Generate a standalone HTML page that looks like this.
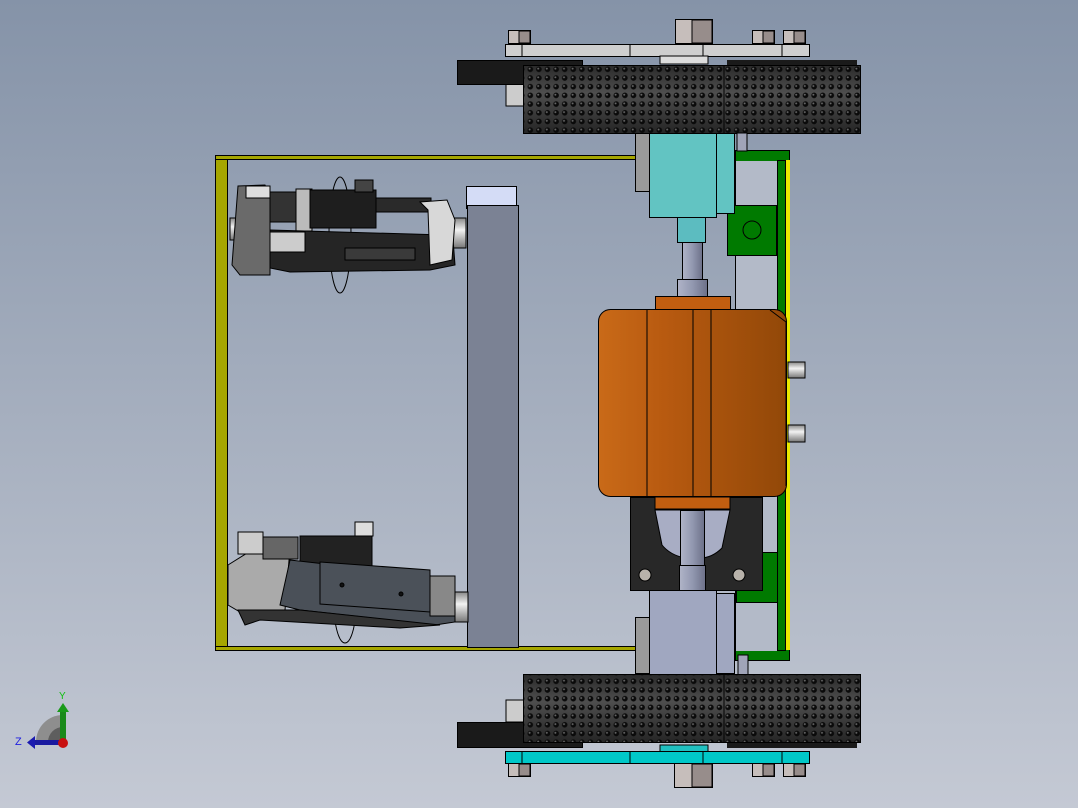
<!DOCTYPE html>
<html><head><meta charset="utf-8"><style>html,body{margin:0;padding:0;overflow:hidden}svg{display:block}</style></head><body>
<svg width="1078" height="808" viewBox="0 0 1078 808" xmlns="http://www.w3.org/2000/svg" font-family="Liberation Sans, sans-serif">
<defs>
<linearGradient id="bg" x1="0" y1="0" x2="0" y2="1"><stop offset="0" stop-color="#8593a8"/><stop offset="1" stop-color="#c4c9d4"/></linearGradient>
<pattern id="dots" width="8.6" height="8.7" patternUnits="userSpaceOnUse" x="526" y="65"><circle cx="4.3" cy="4.3" r="2.8" fill="#0a0a0a"/><circle cx="3.6" cy="3.6" r="1" fill="#666"/></pattern>
<pattern id="dots2" width="8.6" height="8.7" patternUnits="userSpaceOnUse" x="526" y="677"><circle cx="4.3" cy="4.3" r="2.8" fill="#0a0a0a"/><circle cx="3.6" cy="3.6" r="1" fill="#666"/></pattern>
<linearGradient id="tire" x1="0" y1="0" x2="0" y2="1"><stop offset="0" stop-color="#2a2a2a"/><stop offset=".4" stop-color="#4e4e4e"/><stop offset="1" stop-color="#252525"/></linearGradient>
<linearGradient id="org" x1="0" y1="0" x2="1" y2="0"><stop offset="0" stop-color="#c96a18"/><stop offset=".35" stop-color="#b85a10"/><stop offset="1" stop-color="#924808"/></linearGradient>
<linearGradient id="shaft" x1="0" y1="0" x2="1" y2="0"><stop offset="0" stop-color="#b0b4c8"/><stop offset=".5" stop-color="#9298b0"/><stop offset="1" stop-color="#6c7088"/></linearGradient>
<linearGradient id="pin" x1="0" y1="0" x2="0" y2="1"><stop offset="0" stop-color="#888"/><stop offset=".4" stop-color="#f2f2f2"/><stop offset="1" stop-color="#777"/></linearGradient>
</defs>
<rect width="1078" height="808" fill="url(#bg)"/>

<!-- yellow frame -->
<rect x="215.5" y="155.5" width="12" height="495" fill="#a6a600" stroke="#000"/>
<rect x="215.5" y="155.5" width="420" height="4" fill="#a6a600" stroke="#000"/>
<rect x="215.5" y="646.5" width="420" height="4" fill="#a6a600" stroke="#000"/>

<!-- grey bar -->
<rect x="466.5" y="186.5" width="50" height="22" fill="#d4dcf6" stroke="#000"/>
<rect x="467.5" y="205.5" width="51" height="442" fill="#7b8294" stroke="#000"/>

<!-- top motor -->
<g stroke="#000" stroke-width="1">
<ellipse cx="340" cy="235" rx="11" ry="58" fill="none"/>
<rect x="452" y="218" width="14" height="30" fill="url(#pin)"/>
<rect x="230" y="218" width="10" height="22" fill="url(#pin)"/>
<polygon points="238,186 265,185 270,195 270,275 240,275 232,265" fill="#6a6a6a"/>
<rect x="246" y="186" width="24" height="12" fill="#ddd"/>
<rect x="270" y="192" width="30" height="30" fill="#333"/>
<rect x="296" y="189" width="16" height="42" fill="#bbb"/>
<rect x="310" y="190" width="66" height="38" fill="#1e1e1e"/>
<rect x="355" y="180" width="18" height="12" fill="#444"/>
<rect x="376" y="198" width="55" height="14" fill="#2a2a2a"/>
<polygon points="270,230 445,235 452,226 455,265 430,270 290,272 270,268" fill="#252525"/>
<rect x="270" y="232" width="35" height="20" fill="#ccc"/>
<polygon points="420,202 447,200 455,220 452,260 430,265 428,210" fill="#d8d8d8"/>
<rect x="345" y="248" width="70" height="12" fill="#3a3a3a"/>
</g>

<!-- bottom motor -->
<g stroke="#000" stroke-width="1">
<ellipse cx="345" cy="595" rx="12" ry="48" fill="none"/>
<rect x="452" y="592" width="16" height="30" fill="url(#pin)"/>
<polygon points="228,565 260,545 290,548 285,610 240,612 228,605" fill="#aaa"/>
<rect x="238" y="532" width="25" height="22" fill="#ccc"/>
<rect x="263" y="537" width="35" height="22" fill="#666"/>
<rect x="300" y="536" width="72" height="32" fill="#222"/>
<rect x="355" y="522" width="18" height="14" fill="#ddd"/>
<polygon points="290,560 440,577 455,580 455,622 435,625 300,610 280,605" fill="#4a5058"/>
<polygon points="320,562 430,570 430,612 320,604" fill="#4b5159"/>
<rect x="430" y="576" width="25" height="40" fill="#888"/>
<polygon points="238,610 300,610 440,625 400,628 260,620 245,625" fill="#333"/>
<circle cx="342" cy="585" r="2" fill="#111"/>
<circle cx="401" cy="594" r="2" fill="#111"/>
</g>

<!-- green bracket -->
<g stroke="#000">
<rect x="735.5" y="150.5" width="54" height="510" fill="#007a00"/>
<rect x="736" y="161" width="42" height="490" fill="#b3bac8" stroke="none"/>
<rect x="777.5" y="160.5" width="8" height="490" fill="#007a00"/>
<rect x="786" y="160" width="4" height="490" fill="#eaea00" stroke="none"/>
<rect x="727.5" y="205.5" width="49" height="50" fill="#007a00"/>
<circle cx="752" cy="230" r="9" fill="none"/>
<rect x="736.5" y="552.5" width="41" height="50" fill="#007a00"/>
</g>

<!-- top plate & bolts -->
<g stroke="#000">
<rect x="675.5" y="19.5" width="37" height="24" fill="#c6bebb"/><rect x="692" y="20" width="20" height="23" fill="#978d8b"/>
<rect x="508.5" y="30.5" width="22" height="13" fill="#c6bebb"/><rect x="519" y="31" width="11" height="12" fill="#978d8b"/>
<rect x="752.5" y="30.5" width="22" height="13" fill="#c6bebb"/><rect x="763" y="31" width="11" height="12" fill="#978d8b"/>
<rect x="783.5" y="30.5" width="22" height="13" fill="#c6bebb"/><rect x="794" y="31" width="11" height="12" fill="#978d8b"/>
<rect x="505.5" y="44.5" width="304" height="12" fill="#cfcfcf"/>
<line x1="522" y1="44" x2="522" y2="56"/><line x1="630" y1="44" x2="630" y2="56"/><line x1="703" y1="44" x2="703" y2="56"/><line x1="782" y1="44" x2="782" y2="56"/>
<rect x="660" y="56" width="48" height="8" fill="#ddd"/>
<rect x="506" y="84" width="18" height="22" fill="#ccc"/>
</g>
<rect x="457.5" y="60.5" width="125" height="24" fill="#1a1a1a" stroke="#000"/>
<rect x="727" y="60" width="130" height="6" fill="#1a1a1a"/>
<rect x="523.5" y="65.5" width="337" height="68" fill="url(#tire)" stroke="#000"/>
<rect x="524" y="66" width="336" height="67" fill="url(#dots)"/>
<line x1="724" y1="66" x2="724" y2="133" stroke="#000"/>

<!-- cyan block top -->
<g stroke="#000">
<rect x="635.5" y="133.5" width="15" height="58" fill="#9a9a9a"/>
<rect x="649.5" y="133.5" width="67" height="84" fill="#62c4c2"/>
<rect x="716.5" y="133.5" width="18" height="80" fill="#62c4c2"/>
<rect x="737" y="133" width="10" height="18" fill="#a0a4b8"/>
<rect x="677.5" y="217.5" width="28" height="25" fill="#5cbcc0"/>
<rect x="682.5" y="242.5" width="20" height="40" fill="url(#shaft)"/>
<rect x="677.5" y="279.5" width="30" height="20" fill="url(#shaft)"/>
</g>

<!-- orange motor -->
<g stroke="#000">
<rect x="655.5" y="296.5" width="75" height="14" fill="#c25e10"/>
<rect x="598.5" y="309.5" width="188" height="187" rx="12" fill="url(#org)"/>
<polyline points="770,310 786,322 786,486" fill="none"/>
<line x1="647" y1="310" x2="647" y2="497"/><line x1="693" y1="310" x2="693" y2="497"/><line x1="711" y1="310" x2="711" y2="497"/>
<rect x="788" y="362" width="17" height="16" fill="url(#pin)"/>
<rect x="788" y="425" width="17" height="17" fill="url(#pin)"/>
</g>

<!-- dark block -->
<g stroke="#000">
<rect x="630.5" y="497.5" width="132" height="93" fill="#282828"/>
<rect x="655" y="497" width="75" height="12" fill="#c25e10"/>
<path d="M655,510 L730,510 L722,548 Q712,558 700,558 L685,558 Q670,555 662,545 Z" fill="#a8adc4"/>
<rect x="680.5" y="510.5" width="24" height="80" fill="url(#shaft)"/>
<rect x="679.5" y="565.5" width="26" height="25" fill="url(#shaft)"/>
<circle cx="645" cy="575" r="6" fill="#b8b2aa"/><circle cx="739" cy="575" r="6" fill="#b8b2aa"/>
<rect x="635.5" y="617.5" width="15" height="56" fill="#9a9a9a"/>
<rect x="649.5" y="590.5" width="67" height="84" fill="#a0a7c0"/>
<rect x="716.5" y="593.5" width="18" height="80" fill="#a0a7c0"/>
<rect x="738" y="655" width="10" height="20" fill="#a0a4b8"/>
</g>

<!-- bottom wheel -->
<rect x="457.5" y="722.5" width="125" height="25" fill="#1a1a1a" stroke="#000"/>
<rect x="727" y="742" width="130" height="6" fill="#1a1a1a"/>
<rect x="506" y="700" width="18" height="22" fill="#ccc" stroke="#000"/>
<rect x="523.5" y="674.5" width="337" height="68" fill="url(#tire)" stroke="#000"/>
<rect x="524" y="675" width="336" height="67" fill="url(#dots2)"/>
<line x1="724" y1="675" x2="724" y2="742" stroke="#000"/>
<g stroke="#000">
<rect x="660" y="745" width="48" height="8" fill="#20c0c0"/>
<rect x="505.5" y="751.5" width="304" height="12" fill="#00c8c8"/>
<line x1="522" y1="751" x2="522" y2="763"/><line x1="630" y1="751" x2="630" y2="763"/><line x1="703" y1="751" x2="703" y2="763"/><line x1="782" y1="751" x2="782" y2="763"/>
<rect x="508.5" y="763.5" width="22" height="13" fill="#c6bebb"/><rect x="519" y="764" width="11" height="12" fill="#978d8b"/>
<rect x="752.5" y="763.5" width="22" height="13" fill="#c6bebb"/><rect x="763" y="764" width="11" height="12" fill="#978d8b"/>
<rect x="783.5" y="763.5" width="22" height="13" fill="#c6bebb"/><rect x="794" y="764" width="11" height="12" fill="#978d8b"/>
<rect x="674.5" y="763.5" width="38" height="24" fill="#c6bebb"/><rect x="692" y="764" width="20" height="23" fill="#978d8b"/>
</g>

<!-- axis triad -->
<path d="M36,742 A27,27 0 0 1 63,715 L63,742 Z" fill="#8e8e8e"/>
<path d="M48,742 A15,15 0 0 1 63,727 L63,742 Z" fill="#5e5e5e"/>
<rect x="60" y="711" width="6" height="31" fill="#1a8a1a"/>
<polygon points="57,712 63,703 69,712" fill="#1a9a1a"/>
<rect x="34" y="740" width="28" height="5" fill="#1a1aa0"/>
<polygon points="35,736 27,742.5 35,749" fill="#1a1ab0"/>
<circle cx="63" cy="743" r="5" fill="#c81010"/>
<text x="59" y="699" font-size="10" fill="#10c010">Y</text>
<text x="15" y="745" font-size="11" fill="#2020e0">Z</text>
</svg>
</body></html>
